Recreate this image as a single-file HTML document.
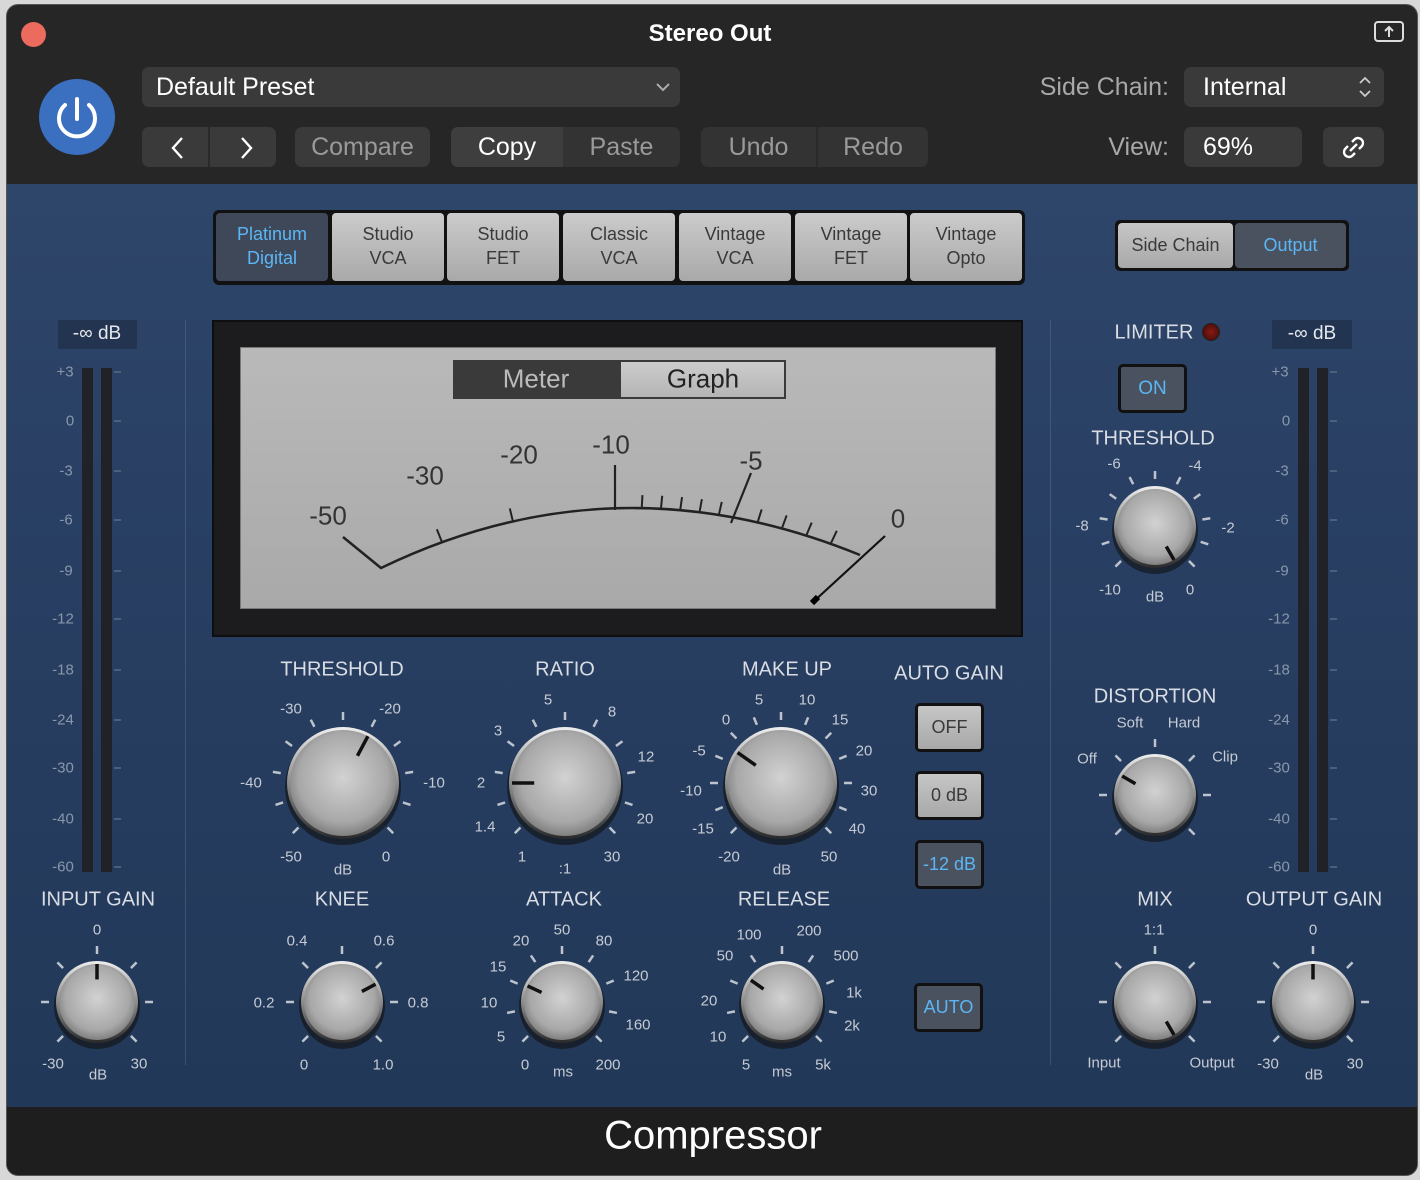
<!DOCTYPE html>
<html><head><meta charset="utf-8">
<style>
*{margin:0;padding:0;box-sizing:border-box}
body{width:1420px;height:1180px;background:#d8d8d8;font-family:"Liberation Sans",sans-serif;position:relative;overflow:hidden}
.win{position:absolute;left:6px;top:4px;width:1412px;height:1172px;border-radius:12px;background:#262626;overflow:hidden;border:1px solid #555}
.panel{position:absolute;left:0;top:179px;width:1412px;height:923px;background:linear-gradient(180deg,#2e466a 0%,#283f63 40%,#223858 100%)}
.foot{position:absolute;left:0;top:1102px;width:1412px;height:70px;background:#1e1e1e}
.a{position:absolute}
.t{position:absolute;transform:translate(-50%,-50%);white-space:nowrap;color:#d4d8de}
.btn{position:absolute;background:#3a3a3a;border-radius:7px;color:#9a9a9a;font-size:25px;display:flex;align-items:center;justify-content:center}
.tab{position:absolute;top:213px;height:68px;width:112px;background:linear-gradient(#cbcbcb,#a9a9a9);border-radius:4px;color:#3a3a3a;font-size:18px;line-height:24px;text-align:center;padding-top:9px}
.sq{position:absolute;width:69px;height:49px;border:3px solid #111;border-radius:5px;display:flex;align-items:center;justify-content:center;font-size:18px}
.lt{background:linear-gradient(#c6c6c6,#a8a8a8);color:#3a3a3a}
.dk{background:#4a5260;color:#5bb6f5}
.s{font-size:15px;color:#c5cad3}
.lbl{font-size:20px;color:#d9dde3}
</style></head><body>
<div class="win">
 <div class="a" style="left:14px;top:17px;width:25px;height:25px;border-radius:50%;background:#ed6a5e"></div>
 <div class="t" style="left:703px;top:29px;font-size:24px;font-weight:bold;color:#fff">Stereo Out</div>
 <svg class="a" style="left:1366px;top:14px" width="32" height="26"><rect x="2" y="3" width="28" height="19" rx="3" fill="none" stroke="#ddd" stroke-width="2"/><path d="M16 18V9M12 12l4-4 4 4" stroke="#ddd" stroke-width="2" fill="none"/></svg>
 <div class="a" style="left:32px;top:74px;width:76px;height:76px;border-radius:50%;background:#3b6fbf"></div>
 <svg class="a" style="left:32px;top:74px" width="76" height="76"><path d="M26 26a18 18 0 1 0 24 0" fill="none" stroke="#fff" stroke-width="4" stroke-linecap="round"/><path d="M38 20v20" stroke="#fff" stroke-width="4" stroke-linecap="round"/></svg>
 <div class="btn" style="left:135px;top:62px;width:538px;height:40px;justify-content:flex-start;padding-left:14px;color:#fff">Default Preset</div>
 <svg class="a" style="left:648px;top:75px" width="16" height="14"><path d="M2 4l6 6 6-6" stroke="#aaa" stroke-width="2" fill="none"/></svg>
 <div class="btn" style="left:135px;top:122px;width:134px;height:40px"></div>
 <div class="a" style="left:201px;top:122px;width:2px;height:40px;background:#2a2a2a"></div>
 <svg class="a" style="left:155px;top:130px" width="100" height="26"><path d="M20 3l-9 10 9 10M80 3l9 10-9 10" stroke="#fff" stroke-width="2.4" fill="none"/></svg>
 <div class="btn" style="left:288px;top:122px;width:135px;height:40px">Compare</div>
 <div class="btn" style="left:444px;top:122px;width:229px;height:40px;background:#333"></div>
 <div class="btn" style="left:444px;top:122px;width:112px;height:40px;background:#3e3e3e;color:#fff;border-radius:7px 0 0 7px">Copy</div>
 <div class="btn" style="left:556px;top:122px;width:117px;height:40px;background:transparent">Paste</div>
 <div class="btn" style="left:694px;top:122px;width:227px;height:40px;background:#333"></div>
 <div class="a" style="left:809px;top:122px;width:2px;height:40px;background:#2a2a2a"></div>
 <div class="btn" style="left:694px;top:122px;width:115px;height:40px;background:transparent">Undo</div>
 <div class="btn" style="left:811px;top:122px;width:110px;height:40px;background:transparent">Redo</div>
 <div class="a" style="left:980px;top:62px;width:182px;height:40px;line-height:40px;text-align:right;font-size:25px;color:#a8a8a8">Side Chain:</div>
 <div class="btn" style="left:1177px;top:62px;width:200px;height:40px;justify-content:flex-start;padding-left:19px;color:#fff">Internal</div>
 <div class="a" style="left:980px;top:122px;width:182px;height:40px;line-height:40px;text-align:right;font-size:25px;color:#a8a8a8">View:</div>
 <div class="btn" style="left:1177px;top:122px;width:118px;height:40px;justify-content:flex-start;padding-left:19px;color:#fff">69%</div>
 <svg class="a" style="left:1350px;top:70px" width="16" height="88"><path d="M3 8l5-5 5 5M3 16l5 5 5-5M3 68l5-5 5 5M3 76l5 5 5-5" stroke="#ccc" stroke-width="1.8" fill="none"/></svg>
 <div class="btn" style="left:1316px;top:122px;width:61px;height:40px"></div>
 <svg class="a" style="left:1332px;top:128px" width="30" height="30"><g fill="none" stroke="#fff" stroke-width="2.4"><path d="M13 9l3-3a5 5 0 0 1 7 7l-3 3"/><path d="M16 20l-3 3a5 5 0 0 1-7-7l3-3"/><path d="M11 18l7-7"/></g></svg>

 <div class="panel"></div>
 <div class="foot"></div>
 <div class="t" style="left:706px;top:1131px;font-size:40px;color:#fff">Compressor</div>
</div>

<div class="a" style="left:213px;top:210px;width:812px;height:75px;background:#111;border-radius:6px"></div>
<div class="tab" style="left:216px;background:#3f4859;color:#5bb6f5">Platinum<br>Digital</div>
<div class="tab" style="left:332px">Studio<br>VCA</div>
<div class="tab" style="left:447px">Studio<br>FET</div>
<div class="tab" style="left:563px">Classic<br>VCA</div>
<div class="tab" style="left:679px">Vintage<br>VCA</div>
<div class="tab" style="left:795px">Vintage<br>FET</div>
<div class="tab" style="left:910px">Vintage<br>Opto</div>

<div class="a" style="left:1115px;top:220px;width:234px;height:51px;background:#111;border-radius:5px"></div>
<div class="a lt" style="left:1118px;top:223px;width:115px;height:45px;border-radius:4px;font-size:18px;display:flex;align-items:center;justify-content:center">Side Chain</div>
<div class="a dk" style="left:1235px;top:223px;width:111px;height:45px;border-radius:4px;font-size:18px;display:flex;align-items:center;justify-content:center">Output</div>

<div class="a" style="left:185px;top:320px;width:1px;height:745px;background:rgba(255,255,255,.12)"></div>
<div class="a" style="left:1050px;top:320px;width:1px;height:745px;background:rgba(255,255,255,.12)"></div>

<div class="a" style="left:58px;top:320px;width:79px;height:29px;background:#233450"></div>
<div class="t" style="left:97px;top:334px;font-size:19px;color:#e5e8ec">-∞ dB</div>
<div class="a" style="left:82px;top:368px;width:11px;height:504px;background:#202227"></div>
<div class="a" style="left:101px;top:368px;width:11px;height:504px;background:#202227"></div>
<div class="a" style="left:1272px;top:320px;width:80px;height:29px;background:#233450"></div>
<div class="t" style="left:1312px;top:334px;font-size:19px;color:#e5e8ec">-∞ dB</div>
<div class="a" style="left:1298px;top:368px;width:11px;height:504px;background:#202227"></div>
<div class="a" style="left:1317px;top:368px;width:11px;height:504px;background:#202227"></div>
<div class="t s" style="left:65px;top:372px;color:#8a97ab">+3</div><div class="t s" style="left:1280px;top:372px;color:#8a97ab">+3</div>
<div class="t s" style="left:70px;top:421px;color:#8a97ab">0</div><div class="t s" style="left:1286px;top:421px;color:#8a97ab">0</div>
<div class="t s" style="left:66px;top:471px;color:#8a97ab">-3</div><div class="t s" style="left:1282px;top:471px;color:#8a97ab">-3</div>
<div class="t s" style="left:66px;top:520px;color:#8a97ab">-6</div><div class="t s" style="left:1282px;top:520px;color:#8a97ab">-6</div>
<div class="t s" style="left:66px;top:571px;color:#8a97ab">-9</div><div class="t s" style="left:1282px;top:571px;color:#8a97ab">-9</div>
<div class="t s" style="left:63px;top:619px;color:#8a97ab">-12</div><div class="t s" style="left:1279px;top:619px;color:#8a97ab">-12</div>
<div class="t s" style="left:63px;top:670px;color:#8a97ab">-18</div><div class="t s" style="left:1279px;top:670px;color:#8a97ab">-18</div>
<div class="t s" style="left:63px;top:720px;color:#8a97ab">-24</div><div class="t s" style="left:1279px;top:720px;color:#8a97ab">-24</div>
<div class="t s" style="left:63px;top:768px;color:#8a97ab">-30</div><div class="t s" style="left:1279px;top:768px;color:#8a97ab">-30</div>
<div class="t s" style="left:63px;top:819px;color:#8a97ab">-40</div><div class="t s" style="left:1279px;top:819px;color:#8a97ab">-40</div>
<div class="t s" style="left:63px;top:867px;color:#8a97ab">-60</div><div class="t s" style="left:1279px;top:867px;color:#8a97ab">-60</div>

<div class="a" style="left:212px;top:320px;width:811px;height:317px;background:#1c1c1e;border:2px solid #0e0e0e"></div>
<div class="a" style="left:240px;top:347px;width:756px;height:262px;background:linear-gradient(180deg,#b9b9b9,#a9a9a9);border:1px solid #777"></div>
<div class="a" style="left:453px;top:360px;width:333px;height:39px;background:#3a3a3a;border:2px solid #3a3a3a"></div>
<div class="a" style="left:621px;top:362px;width:163px;height:35px;background:linear-gradient(#ccc,#b5b5b5)"></div>
<div class="t" style="left:536px;top:379px;font-size:26px;color:#bbb">Meter</div>
<div class="t" style="left:703px;top:379px;font-size:26px;color:#222">Graph</div>
<svg class="a" style="left:240px;top:347px" width="756" height="262" id="vu">
 <path d="M103 190L141 221Q375 108 620 208" fill="none" stroke="#222" stroke-width="2.5"/>
 <path d="M375 118v45M511 126l-20 50" stroke="#222" stroke-width="2.2"/>
 <path d="M572 256L645 189" stroke="#111" stroke-width="2.2"/>
 <path d="M572 256l6-6" stroke="#000" stroke-width="6"/>
</svg>
<div class="t" style="left:328px;top:516px;font-size:26px;color:#333">-50</div>
<div class="t" style="left:425px;top:476px;font-size:26px;color:#333">-30</div>
<div class="t" style="left:519px;top:455px;font-size:26px;color:#333">-20</div>
<div class="t" style="left:611px;top:445px;font-size:26px;color:#333">-10</div>
<div class="t" style="left:751px;top:461px;font-size:26px;color:#333">-5</div>
<div class="t" style="left:898px;top:519px;font-size:26px;color:#333">0</div>

<svg class="a" id="kn" style="left:0;top:0" width="1420" height="1180">
<defs>
<radialGradient id="kg" cx="50%" cy="45%" r="60%"><stop offset="0" stop-color="#d2d2d2"/><stop offset=".7" stop-color="#a8a8a8"/><stop offset="1" stop-color="#707070"/></radialGradient>
<linearGradient id="kr" x1="0" y1="0" x2="0" y2="1"><stop offset="0" stop-color="#eee"/><stop offset="1" stop-color="#2a2a2a"/></linearGradient>
</defs>
</svg>

<div class="t lbl" style="left:342px;top:670px">THRESHOLD</div>
<div class="t lbl" style="left:565px;top:670px">RATIO</div>
<div class="t lbl" style="left:787px;top:670px">MAKE UP</div>
<div class="t lbl" style="left:949px;top:674px">AUTO GAIN</div>
<div class="t lbl" style="left:98px;top:900px">INPUT GAIN</div>
<div class="t lbl" style="left:342px;top:900px">KNEE</div>
<div class="t lbl" style="left:564px;top:900px">ATTACK</div>
<div class="t lbl" style="left:784px;top:900px">RELEASE</div>
<div class="t lbl" style="left:1155px;top:900px">MIX</div>
<div class="t lbl" style="left:1314px;top:900px">OUTPUT GAIN</div>
<div class="t lbl" style="left:1154px;top:333px">LIMITER</div>
<div class="a" style="left:1202px;top:323px;width:18px;height:18px;border-radius:50%;background:radial-gradient(#8a1a14,#3a0a08);border:1px solid #222"></div>
<div class="t lbl" style="left:1153px;top:439px">THRESHOLD</div>
<div class="t lbl" style="left:1155px;top:697px">DISTORTION</div>
<div class="t s" style="left:1130px;top:723px">Soft</div><div class="t s" style="left:1184px;top:723px">Hard</div>
<div class="t s" style="left:1087px;top:759px">Off</div><div class="t s" style="left:1225px;top:757px">Clip</div>

<div class="sq dk" style="left:1118px;top:364px;font-size:19px">ON</div>
<div class="sq lt" style="left:915px;top:703px">OFF</div>
<div class="sq lt" style="left:915px;top:771px">0 dB</div>
<div class="sq dk" style="left:915px;top:840px">-12 dB</div>
<div class="sq dk" style="left:914px;top:983px">AUTO</div>

<div class="t s" style="left:291px;top:709px">-30</div><div class="t s" style="left:390px;top:709px">-20</div>
<div class="t s" style="left:251px;top:783px">-40</div><div class="t s" style="left:434px;top:783px">-10</div>
<div class="t s" style="left:291px;top:857px">-50</div><div class="t s" style="left:386px;top:857px">0</div><div class="t s" style="left:343px;top:870px">dB</div>

<div class="t s" style="left:548px;top:700px">5</div><div class="t s" style="left:612px;top:712px">8</div>
<div class="t s" style="left:498px;top:731px">3</div><div class="t s" style="left:646px;top:757px">12</div>
<div class="t s" style="left:481px;top:783px">2</div>
<div class="t s" style="left:485px;top:827px">1.4</div><div class="t s" style="left:645px;top:819px">20</div>
<div class="t s" style="left:522px;top:857px">1</div><div class="t s" style="left:612px;top:857px">30</div><div class="t s" style="left:565px;top:869px">:1</div>

<div class="t s" style="left:759px;top:700px">5</div><div class="t s" style="left:807px;top:700px">10</div>
<div class="t s" style="left:726px;top:720px">0</div><div class="t s" style="left:840px;top:720px">15</div>
<div class="t s" style="left:699px;top:751px">-5</div><div class="t s" style="left:864px;top:751px">20</div>
<div class="t s" style="left:691px;top:791px">-10</div><div class="t s" style="left:869px;top:791px">30</div>
<div class="t s" style="left:703px;top:829px">-15</div><div class="t s" style="left:857px;top:829px">40</div>
<div class="t s" style="left:729px;top:857px">-20</div><div class="t s" style="left:829px;top:857px">50</div><div class="t s" style="left:782px;top:870px">dB</div>

<div class="t s" style="left:97px;top:930px">0</div>
<div class="t s" style="left:53px;top:1064px">-30</div><div class="t s" style="left:139px;top:1064px">30</div><div class="t s" style="left:98px;top:1075px">dB</div>

<div class="t s" style="left:297px;top:941px">0.4</div><div class="t s" style="left:384px;top:941px">0.6</div>
<div class="t s" style="left:264px;top:1003px">0.2</div><div class="t s" style="left:418px;top:1003px">0.8</div>
<div class="t s" style="left:304px;top:1065px">0</div><div class="t s" style="left:383px;top:1065px">1.0</div>

<div class="t s" style="left:562px;top:930px">50</div>
<div class="t s" style="left:521px;top:941px">20</div><div class="t s" style="left:604px;top:941px">80</div>
<div class="t s" style="left:498px;top:967px">15</div><div class="t s" style="left:636px;top:976px">120</div>
<div class="t s" style="left:489px;top:1003px">10</div>
<div class="t s" style="left:501px;top:1037px">5</div><div class="t s" style="left:638px;top:1025px">160</div>
<div class="t s" style="left:525px;top:1065px">0</div><div class="t s" style="left:608px;top:1065px">200</div><div class="t s" style="left:563px;top:1072px">ms</div>

<div class="t s" style="left:749px;top:935px">100</div><div class="t s" style="left:809px;top:931px">200</div>
<div class="t s" style="left:725px;top:956px">50</div><div class="t s" style="left:846px;top:956px">500</div>
<div class="t s" style="left:709px;top:1001px">20</div><div class="t s" style="left:854px;top:993px">1k</div>
<div class="t s" style="left:718px;top:1037px">10</div><div class="t s" style="left:852px;top:1026px">2k</div>
<div class="t s" style="left:746px;top:1065px">5</div><div class="t s" style="left:823px;top:1065px">5k</div><div class="t s" style="left:782px;top:1072px">ms</div>

<div class="t s" style="left:1114px;top:464px">-6</div><div class="t s" style="left:1195px;top:466px">-4</div>
<div class="t s" style="left:1082px;top:526px">-8</div><div class="t s" style="left:1228px;top:528px">-2</div>
<div class="t s" style="left:1110px;top:590px">-10</div><div class="t s" style="left:1190px;top:590px">0</div><div class="t s" style="left:1155px;top:597px">dB</div>

<div class="t s" style="left:1154px;top:930px">1:1</div>
<div class="t s" style="left:1104px;top:1063px">Input</div><div class="t s" style="left:1212px;top:1063px">Output</div>

<div class="t s" style="left:1313px;top:930px">0</div>
<div class="t s" style="left:1268px;top:1064px">-30</div><div class="t s" style="left:1355px;top:1064px">30</div><div class="t s" style="left:1314px;top:1075px">dB</div>

<script>
(function(){
var s=document.getElementById('kn'),NS='http://www.w3.org/2000/svg';
function el(n,a){var e=document.createElementNS(NS,n);for(var k in a)e.setAttribute(k,a[k]);s.appendChild(e);return e}
function knob(cx,cy,r,n,ang){
 for(var i=0;i<n;i++){var a=(-135+270*i/(n-1))*Math.PI/180,r1=r+7,r2=r+15;
  el('line',{x1:cx+r1*Math.sin(a),y1:cy-r1*Math.cos(a),x2:cx+r2*Math.sin(a),y2:cy-r2*Math.cos(a),stroke:'#bcc3cd','stroke-width':2.5});}
 el('circle',{cx:cx,cy:cy+4,r:r+2,fill:'#111',opacity:.6});
 el('circle',{cx:cx,cy:cy,r:r,fill:'url(#kr)'});
 el('circle',{cx:cx,cy:cy,r:r-3,fill:'url(#kg)'});
 var a=ang*Math.PI/180;
 el('line',{x1:cx+r*0.55*Math.sin(a),y1:cy-r*0.55*Math.cos(a),x2:cx+(r-3)*Math.sin(a),y2:cy-(r-3)*Math.cos(a),stroke:'#111','stroke-width':3.5});
}
knob(343,783,56,11,28);knob(565,783,56,11,-90);knob(781,783,56,13,-55);
knob(97,1002,41,7,0);knob(342,1002,41,7,62);knob(562,1002,41,9,-65);knob(782,1002,41,9,-55);
knob(1155,527,41,11,150);knob(1155,795,41,7,-60);knob(1155,1002,41,7,150);knob(1313,1002,41,7,0);
var v=document.getElementById('vu');
function p(t){var x0=141,y0=221,cx=375,cy=108,x1=620,y1=208;return [(1-t)*(1-t)*x0+2*(1-t)*t*cx+t*t*x1,(1-t)*(1-t)*y0+2*(1-t)*t*cy+t*t*y1]}
[0.13,0.28,0.55,0.59,0.63,0.67,0.71,0.79,0.84,0.89,0.94].forEach(function(t){var q=p(t);var e=document.createElementNS(NS,'line');e.setAttribute('x1',q[0]);e.setAttribute('y1',q[1]);e.setAttribute('x2',q[0]+(t-0.5)*14);e.setAttribute('y2',q[1]-13);e.setAttribute('stroke','#222');e.setAttribute('stroke-width',2);v.appendChild(e)});
[372,421,471,520,571,619,670,720,768,819,867].forEach(function(y){
 el('line',{x1:114,y1:y,x2:121,y2:y,stroke:'#5a6a82','stroke-width':1.5});
 el('line',{x1:1330,y1:y,x2:1337,y2:y,stroke:'#5a6a82','stroke-width':1.5});});
})();
</script>
</body></html>
